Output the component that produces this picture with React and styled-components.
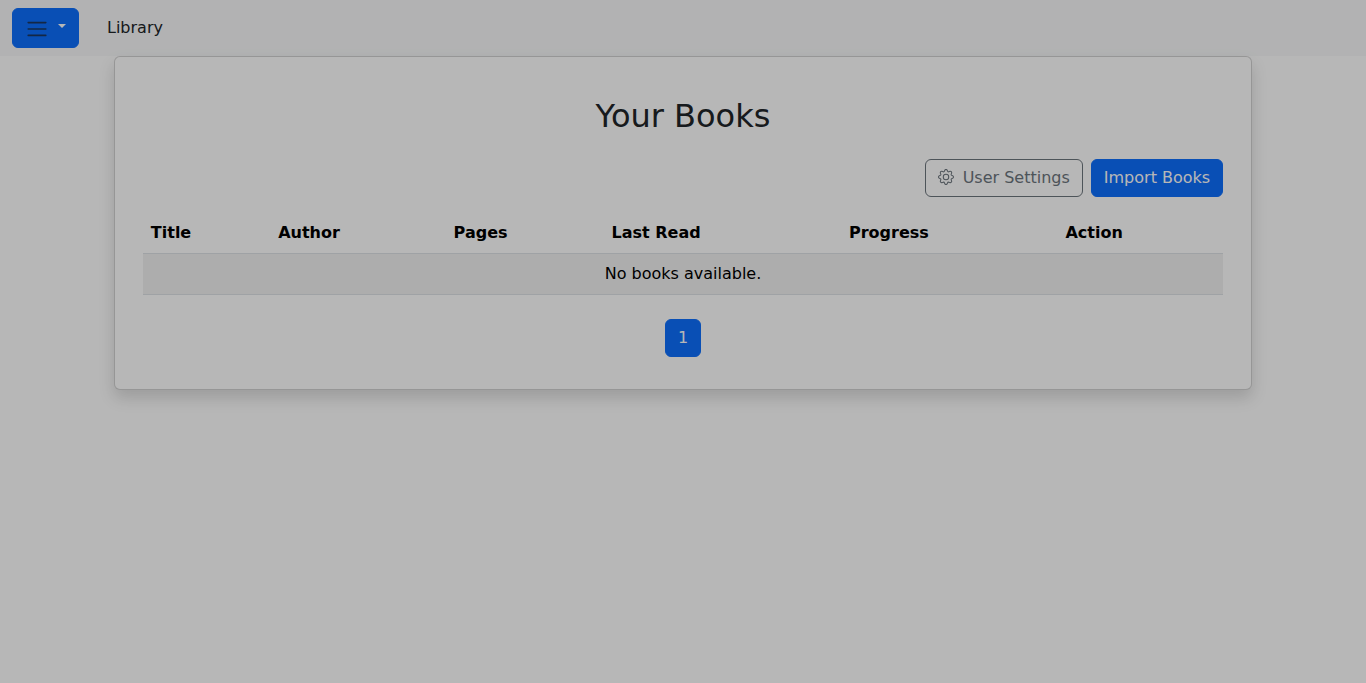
import React from "react";
import styled, { createGlobalStyle, css } from "styled-components";
import { BsGear } from "react-icons/bs";

const GlobalStyle = createGlobalStyle`
  *, *::before, *::after { box-sizing: border-box; }
  body {
    margin: 0;
    min-height: 100vh;
    background: #fff;
    color: #212529;
    font-family: "DejaVu Sans", sans-serif;
    font-size: 16px;
    line-height: 24px;
  }
`;

const NavBar = styled.nav`
  display: flex;
  align-items: center;
  gap: 28px;
  padding: 8px 12px;
  background: #f8f9fa;
`;

const NavLink = styled.a`
  color: #212529;
  text-decoration: none;
`;

const variants = {
  primary: css`
    color: #fff;
    background: #0d6efd;
    border-color: #0d6efd;
  `,
  outline: css`
    color: #6c757d;
    background: transparent;
    border-color: #6c757d;
  `,
};

const Button = styled.button`
  margin: 0;
  padding: 6px 12px;
  border: 1px solid;
  border-radius: 6px;
  font: inherit;
  cursor: pointer;
  ${({ $variant }) => variants[$variant]}
`;

const MenuButton = styled(Button)`
  display: flex;
  align-items: flex-start;
  gap: 9px;
  padding: 8px 12px 6px;
`;

const MenuIcon = styled.svg`
  width: 24px;
  height: 24px;
  fill: none;
  stroke: rgba(33, 37, 41, 0.75);
  stroke-width: 2;
  stroke-linecap: round;
  stroke-miterlimit: 10;
`;

const Caret = styled.span`
  margin-top: 7px;
  border-top: 4px solid;
  border-right: 4px solid transparent;
  border-left: 4px solid transparent;
`;

const SettingsIcon = styled(BsGear)`
  width: 16px;
  height: 16px;
  margin-right: 4px;
  vertical-align: -2px;
`;

const Page = styled.main`
  display: grid;
  grid-template-columns: repeat(12, minmax(0, 1fr));
`;

const Card = styled.section`
  grid-column: 2 / span 10;
  padding: 40px 28px 32px;
  background: #fff;
  border: 1px solid rgba(0, 0, 0, 0.175);
  border-radius: 6px;
  box-shadow: 0 8px 16px rgba(0, 0, 0, 0.15);
`;

const Title = styled.h1`
  margin: 0 0 24px;
  font-size: 32px;
  font-weight: 500;
  line-height: 38px;
  text-align: center;
`;

const Actions = styled.div`
  display: flex;
  justify-content: flex-end;
  gap: 8px;
  margin-bottom: 16px;
`;

const BookTable = styled.table`
  width: 100%;
  margin-bottom: 24px;
  border-collapse: collapse;
  color: #000;
`;

const HeadCell = styled.th`
  padding: 8px;
  border-bottom: 1px solid #dee2e6;
  text-align: left;
`;

const EmptyCell = styled.td`
  padding: 8px;
  border-bottom: 1px solid #dee2e6;
  background: rgba(0, 0, 0, 0.05);
  text-align: center;
`;

const Pagination = styled.ul`
  display: flex;
  justify-content: center;
  margin: 0;
  padding: 0;
  list-style: none;
`;

const PageLink = styled.a`
  display: block;
  padding: 6px 12px;
  color: #fff;
  background: #0d6efd;
  border: 1px solid #0d6efd;
  border-radius: 6px;
  text-decoration: none;
`;

const Backdrop = styled.div`
  position: fixed;
  inset: 0;
  background: rgba(0, 0, 0, 0.284);
  z-index: 10;
`;

const columns = ["Title", "Author", "Pages", "Last Read", "Progress", "Action"];

export default function App() {
  return (
    <>
      <GlobalStyle />
      <NavBar>
        <MenuButton type="button" $variant="primary" aria-label="Menu">
          <MenuIcon viewBox="0 0 30 30" aria-hidden="true">
            <path d="M4 7h22M4 15h22M4 23h22" />
          </MenuIcon>
          <Caret />
        </MenuButton>
        <NavLink href="#library">Library</NavLink>
      </NavBar>
      <Page>
        <Card>
          <Title>Your Books</Title>
          <Actions>
            <Button type="button" $variant="outline">
              <SettingsIcon aria-hidden="true" /> User Settings
            </Button>
            <Button type="button" $variant="primary">
              Import Books
            </Button>
          </Actions>
          <BookTable>
            <thead>
              <tr>
                {columns.map((name) => (
                  <HeadCell key={name} scope="col">{name}</HeadCell>
                ))}
              </tr>
            </thead>
            <tbody>
              <tr>
                <EmptyCell colSpan={columns.length}>No books available.</EmptyCell>
              </tr>
            </tbody>
          </BookTable>
          <nav aria-label="Pages">
            <Pagination>
              <li>
                <PageLink href="#page-1" aria-current="page">1</PageLink>
              </li>
            </Pagination>
          </nav>
        </Card>
      </Page>
      <Backdrop />
    </>
  );
}
